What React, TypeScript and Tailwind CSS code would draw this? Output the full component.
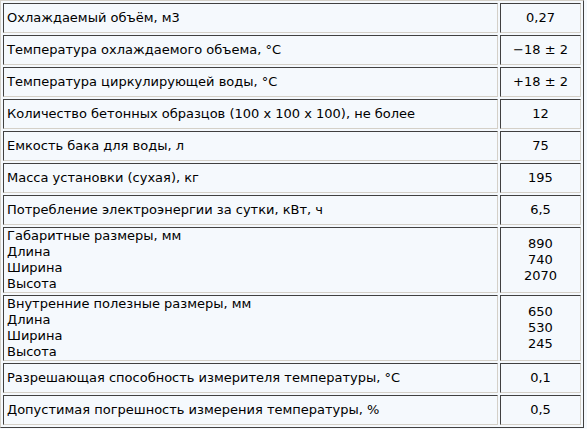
import React from "react";

type Row = { label: string[]; value: string[] };

const rows: Row[] = [
  { label: ["Охлаждаемый объём, м3"], value: ["0,27"] },
  { label: ["Температура охлаждаемого объема, °С"], value: ["\u221218 ± 2"] },
  { label: ["Температура циркулирующей воды, °С"], value: ["+18 ± 2"] },
  { label: ["Количество бетонных образцов (100 х 100 х 100), не более"], value: ["12"] },
  { label: ["Емкость бака для воды, л"], value: ["75"] },
  { label: ["Масса установки (сухая), кг"], value: ["195"] },
  { label: ["Потребление электроэнергии за сутки, кВт, ч"], value: ["6,5"] },
  { label: ["Габаритные размеры, мм", "Длина", "Ширина", "Высота"], value: ["890", "740", "2070"] },
  { label: ["Внутренние полезные размеры, мм", "Длина", "Ширина", "Высота"], value: ["650", "530", "245"] },
  { label: ["Разрешающая способность измерителя температуры, °С"], value: ["0,1"] },
  { label: ["Допустимая погрешность измерения температуры, %"], value: ["0,5"] },
];

const cell =
  "border border-t-[#404040] border-l-[#404040] border-r-[#d4d0c8] border-b-[#d4d0c8] p-0 align-middle";

export default function App() {
  return (
    <div className="min-h-screen bg-[#f5f9fd] font-['DejaVu_Sans',Verdana,sans-serif] text-[13px] leading-[16px] text-black">
      <table className="w-[584px] border-separate border-spacing-[2px] border border-t-[#d4d0c8] border-l-[#d4d0c8] border-r-[#404040] border-b-[#404040]">
        <tbody>
          {rows.map((r, i) => (
            <tr key={i}>
              <td className={`${cell} h-[30px] w-[495px] pl-[3px] text-left`}>
                {r.label.map((l, j) => (
                  <div key={j}>{l}</div>
                ))}
              </td>
              <td className={`${cell} h-[30px] text-center`}>
                {r.value.map((v, j) => (
                  <div key={j}>{v}</div>
                ))}
              </td>
            </tr>
          ))}
        </tbody>
      </table>
    </div>
  );
}
